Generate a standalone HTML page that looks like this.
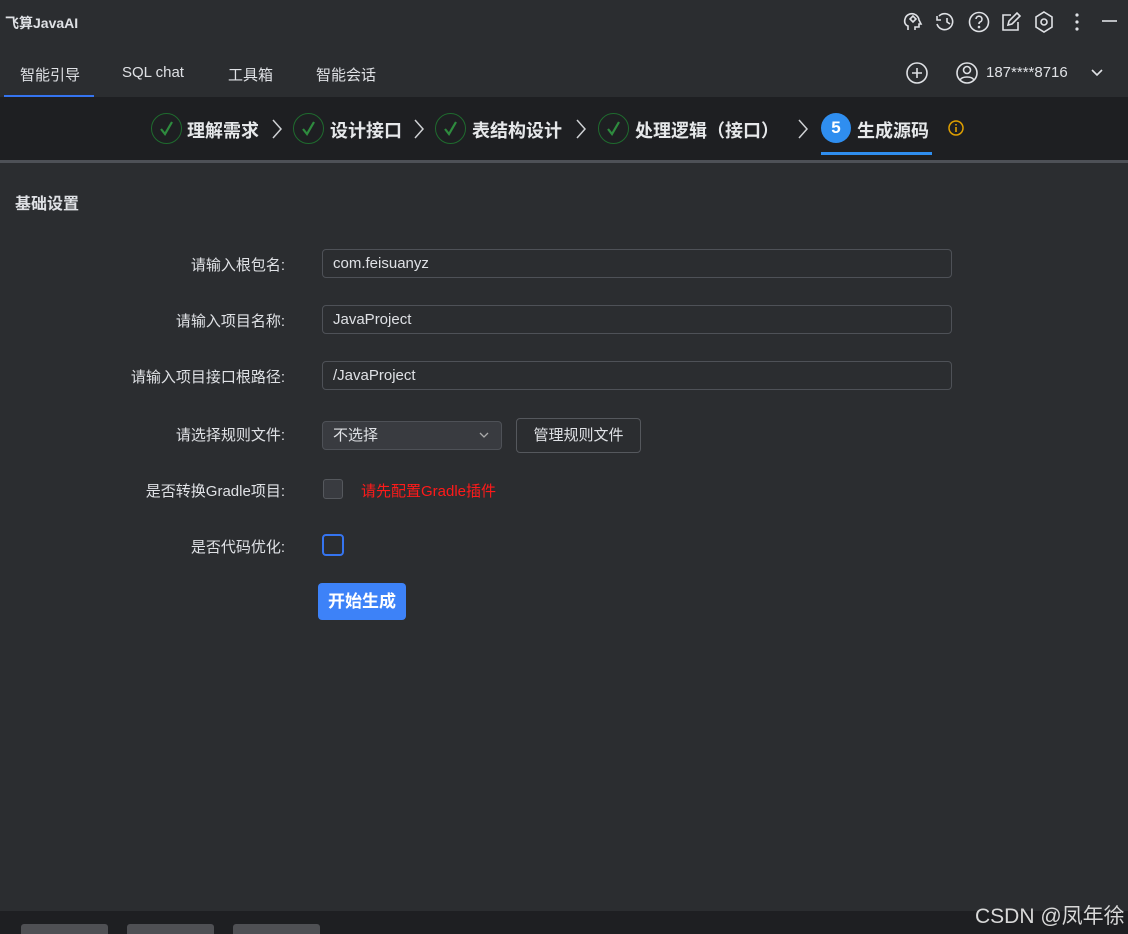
<!DOCTYPE html>
<html><head><meta charset="utf-8"><style>
*{margin:0;padding:0;box-sizing:border-box}
body{width:1128px;height:934px;background:#2b2d30;font-family:"Liberation Sans","Noto Sans CJK SC",sans-serif;color:#dfe1e5;position:relative;overflow:hidden}
.a{position:absolute}
.t{font-size:14px;white-space:nowrap}
.step{position:absolute;top:113px;width:31px;height:31px;border:1.5px solid #1f6b2e;border-radius:50%}
.step svg{position:absolute;left:6px;top:6px}
.st{position:absolute;top:117px;font-size:18px;font-weight:bold;color:#e6e8ea;white-space:nowrap}
.chev{position:absolute;top:118px}
.lbl{position:absolute;right:843px;font-size:15px;color:#dfe1e5;white-space:nowrap}
.inp{position:absolute;left:322px;width:630px;height:29px;border:1px solid #4e5157;border-radius:4px;font-size:15px;padding:0 10px;line-height:27px;color:#dfe1e5}
</style></head><body>
<div class="a t" style="left:5px;top:13px;font-weight:bold;font-size:14px">飞算JavaAI</div>
<svg class="a" style="left:900px;top:8px" width="230" height="28" viewBox="0 0 230 28" fill="none" stroke="#dfe1e5" stroke-width="1.6">
<path d="M8 22v-4c-3-1-4-4-3-7 1-4 5-6 9-5 3 1 5 4 5 6l2 4h-2v3h-4v3"/><path d="M13 8l-3 3 3 3 3-3z"/>
<path d="M39 8a8 8 0 1 1-2 8M37 8v4h4M47 10v4l3 2"/>
<circle cx="79" cy="14" r="9.5"/><path d="M76 11a3 3 0 1 1 4 3c-1 .5-1 1-1 2"/><circle cx="79" cy="19" r=".5"/>
<path d="M111 7h-8v15h15v-8M108 17l1-4 8-8 3 3-8 8z"/>
<path d="M144 4l8 5v10l-8 5-8-5V9z"/><circle cx="144" cy="14" r="3"/>
<circle cx="177" cy="7" r=".8" fill="#dfe1e5"/><circle cx="177" cy="14" r=".8" fill="#dfe1e5"/><circle cx="177" cy="21" r=".8" fill="#dfe1e5"/>
<path d="M202 13h15"/></svg>
<div class="a t" style="left:20px;top:64px;font-size:15px">智能引导</div>
<div class="a t" style="left:122px;top:64px;font-size:15px">SQL chat</div>
<div class="a t" style="left:228px;top:64px;font-size:15px">工具箱</div>
<div class="a t" style="left:316px;top:64px;font-size:15px">智能会话</div>
<div class="a" style="left:4px;top:95px;width:90px;height:2px;background:#3574f0"></div>
<svg class="a" style="left:905px;top:61px" width="210" height="24" viewBox="0 0 210 24" fill="none" stroke="#dfe1e5" stroke-width="1.6">
<circle cx="12" cy="12" r="10"/><path d="M12 7v10M7 12h10"/>
<circle cx="62" cy="12" r="10"/><circle cx="62" cy="9" r="3.5"/><path d="M55 19c2-4 12-4 14 0"/>
<path d="M187 9l5 5 5-5"/></svg>
<div class="a t" style="left:986px;top:64px;font-size:15px">187****8716</div>
<div class="a" style="left:0;top:97px;width:1128px;height:63px;background:#1e1f22"></div>
<div class="a" style="left:0;top:160px;width:1128px;height:3px;background:#4e5157"></div>
<div class="step" style="left:151px"><svg width="17" height="17" viewBox="0 0 17 17"><path d="M3 9l4 5 7-12" stroke="#2e8b3e" stroke-width="2.2" fill="none"/></svg></div>
<div class="st" style="left:187px">理解需求</div>
<div class="step" style="left:293px"><svg width="17" height="17" viewBox="0 0 17 17"><path d="M3 9l4 5 7-12" stroke="#2e8b3e" stroke-width="2.2" fill="none"/></svg></div>
<div class="st" style="left:330px">设计接口</div>
<div class="step" style="left:435px"><svg width="17" height="17" viewBox="0 0 17 17"><path d="M3 9l4 5 7-12" stroke="#2e8b3e" stroke-width="2.2" fill="none"/></svg></div>
<div class="st" style="left:472px">表结构设计</div>
<div class="step" style="left:598px"><svg width="17" height="17" viewBox="0 0 17 17"><path d="M3 9l4 5 7-12" stroke="#2e8b3e" stroke-width="2.2" fill="none"/></svg></div>
<div class="st" style="left:635px">处理逻辑（接口）</div>
<svg class="chev" style="left:270px" width="14" height="22"><path d="M3 2l8 9-8 9" stroke="#cfd1d4" stroke-width="1.5" fill="none"/></svg>
<svg class="chev" style="left:412px" width="14" height="22"><path d="M3 2l8 9-8 9" stroke="#cfd1d4" stroke-width="1.5" fill="none"/></svg>
<svg class="chev" style="left:574px" width="14" height="22"><path d="M3 2l8 9-8 9" stroke="#cfd1d4" stroke-width="1.5" fill="none"/></svg>
<svg class="chev" style="left:796px" width="14" height="22"><path d="M3 2l8 9-8 9" stroke="#cfd1d4" stroke-width="1.5" fill="none"/></svg>
<div class="a" style="left:821px;top:113px;width:30px;height:30px;border-radius:50%;background:#2f8ef0;color:#fff;font-weight:bold;font-size:17px;text-align:center;line-height:30px">5</div>
<div class="st" style="left:857px">生成源码</div>
<div class="a" style="left:821px;top:152px;width:111px;height:3px;background:#2f8ef0"></div>
<svg class="a" style="left:947px;top:119px" width="18" height="18"><circle cx="9" cy="9" r="7" stroke="#e0a000" stroke-width="1.5" fill="none"/><path d="M9 8v5M9 5v1.5" stroke="#e0a000" stroke-width="1.6"/></svg>
<div class="a" style="left:15px;top:190px;font-size:16px;font-weight:bold">基础设置</div>
<div class="lbl" style="top:254px">请输入根包名:</div>
<div class="inp" style="top:249px">com.feisuanyz</div>
<div class="lbl" style="top:310px">请输入项目名称:</div>
<div class="inp" style="top:305px">JavaProject</div>
<div class="lbl" style="top:366px">请输入项目接口根路径:</div>
<div class="inp" style="top:361px">/JavaProject</div>
<div class="lbl" style="top:424px">请选择规则文件:</div>
<div class="a" style="left:322px;top:421px;width:180px;height:29px;background:#393b40;border:1px solid #4e5157;border-radius:4px;font-size:15px;padding:0 10px;line-height:27px">不选择</div>
<svg class="a" style="left:478px;top:430px" width="12" height="10"><path d="M2 3l4 4 4-4" stroke="#aaa" stroke-width="1.3" fill="none"/></svg>
<div class="a" style="left:516px;top:418px;width:125px;height:35px;border:1px solid #55585d;border-radius:4px;font-size:15px;text-align:center;line-height:33px">管理规则文件</div>
<div class="lbl" style="top:480px">是否转换Gradle项目:</div>
<div class="a" style="left:323px;top:479px;width:20px;height:20px;background:#393b40;border:1px solid #55585d;border-radius:3px"></div>
<div class="a t" style="left:361px;top:480px;color:#ff1a1a;font-size:15px">请先配置Gradle插件</div>
<div class="lbl" style="top:536px">是否代码优化:</div>
<div class="a" style="left:322px;top:534px;width:22px;height:22px;border:2px solid #3574f0;border-radius:4px"></div>
<div class="a" style="left:318px;top:583px;width:88px;height:37px;background:#3d82f8;border-radius:4px;color:#fff;font-weight:bold;font-size:17px;text-align:center;line-height:37px">开始生成</div>
<div class="a" style="left:0;top:911px;width:1128px;height:23px;background:#1e1f22;overflow:hidden">
<div class="a" style="left:21px;top:13px;width:87px;height:14px;background:#4f5054;border-radius:3px"></div>
<div class="a" style="left:127px;top:13px;width:87px;height:14px;background:#4f5054;border-radius:3px"></div>
<div class="a" style="left:233px;top:13px;width:87px;height:14px;background:#4f5054;border-radius:3px"></div>
</div>
<div class="a" style="left:975px;top:900px;font-size:21px;color:#d8d8d8;white-space:nowrap">CSDN @凤年徐</div>
</body></html>
